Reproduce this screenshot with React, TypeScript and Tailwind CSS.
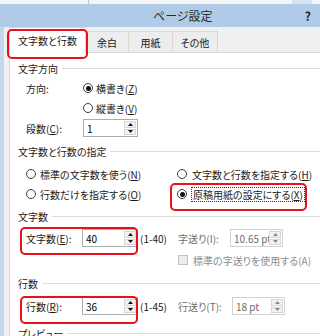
import React from "react";

const K = ({ children }: { children: React.ReactNode }) => (
  <span className="underline underline-offset-[1px]">{children}</span>
);

function Radio({ checked }: { checked?: boolean }) {
  return (
    <span className="w-[10px] h-[10px] rounded-full border border-[#3c3c3c] bg-white flex items-center justify-center shrink-0">
      {checked && <span className="w-[5px] h-[5px] rounded-full bg-[#111]" />}
    </span>
  );
}

function Arrow({ up, color }: { up?: boolean; color: string }) {
  return (
    <svg width="5" height="3" viewBox="0 0 5 3">
      <path d={up ? "M0 3 L2.5 0 L5 3 Z" : "M0 0 L2.5 3 L5 0 Z"} fill={color} />
    </svg>
  );
}

function Spin({ value, className, disabled }: { value: string; className: string; disabled?: boolean }) {
  const arrow = disabled ? "#8a8a8a" : "#111";
  return (
    <div
      className={`h-[18px] flex bg-white border shrink-0 ${className} ${
        disabled ? "border-[#d2d2d2] text-[#6d6d6d]" : "border-[#abadb3] text-black"
      }`}
    >
      <span className="flex-1 overflow-hidden whitespace-nowrap pl-[3px] flex items-center">{value}</span>
      <div className="w-[12px] flex flex-col my-px mr-px gap-px">
        <span className="flex-1 bg-[#f2f2f2] border border-[#d6d6d6] flex items-center justify-center">
          <Arrow up color={arrow} />
        </span>
        <span className="flex-1 bg-[#f2f2f2] border border-[#d6d6d6] flex items-center justify-center">
          <Arrow color={arrow} />
        </span>
      </div>
    </div>
  );
}

function Section({ title, className }: { title: string; className: string }) {
  return (
    <div className={`h-[16px] flex items-center gap-[4px] ${className}`}>
      <span className="whitespace-nowrap">{title}</span>
      <span className="flex-1 h-px bg-[#dcdcdc]" />
    </div>
  );
}

export default function App() {
  return (
    <div className="relative w-[320px] h-[336px] overflow-hidden bg-[#f0f0f0] [font-family:'Noto_Sans_CJK_JP','Noto_Sans',sans-serif] [font-feature-settings:'palt'] text-[10px] text-[#1a1a1a]">
      {/* window behind */}
      <div className="h-[4px] flex bg-[#f4f4f4]">
        <div className="w-[88px]" />
        <div className="w-px bg-[#c4c4c4]" />
        <div className="flex-1" />
        <div className="w-[20px] bg-[#d3e3f3]" />
        <div className="w-[8px]" />
      </div>

      {/* title bar */}
      <div className="h-[23px] bg-[#b0cbe8] flex items-center">
        <span className="ml-[153px] text-[12px] text-[#2b2b2b]">ページ設定</span>
        <span className="ml-auto mr-[9px] text-[12px] font-bold text-[#222]">?</span>
      </div>

      <div className="flex h-[309px]">
        <div className="w-[4px] bg-[#c4d7ec]" />
        <div className="flex-1 flex flex-col pl-[5px]">
          {/* tabs */}
          <div className="h-[29px] flex items-end">
            <div className="relative z-10 -mb-px w-[77px] h-[26px] bg-white border border-b-0 border-[#d9d9d9] flex items-center justify-center">
              文字数と行数
            </div>
            <div className="-ml-px w-[44px] h-[21px] bg-[#ededed] border border-b-0 border-[#d9d9d9] flex items-center justify-center">
              余白
            </div>
            <div className="-ml-px w-[45px] h-[21px] bg-[#ededed] border border-b-0 border-[#d9d9d9] flex items-center justify-center">
              用紙
            </div>
            <div className="-ml-px w-[46px] h-[21px] bg-[#ededed] border border-b-0 border-[#d9d9d9] flex items-center justify-center">
              その他
            </div>
          </div>

          {/* panel */}
          <div className="flex-1 bg-white border-l border-t border-[#d9d9d9] pl-[8px] flex flex-col">
            <Section title="文字方向" className="mt-[7px]" />
            <div className="mt-[4px] h-[16px] flex items-center pl-[8px]">
              <span className="w-[57px]">方向:</span>
              <Radio checked />
              <span className="ml-[3px]">
                横書き(<K>Z</K>)
              </span>
            </div>
            <div className="mt-[4px] h-[16px] flex items-center pl-[65px]">
              <Radio />
              <span className="ml-[3px]">
                縦書き(<K>V</K>)
              </span>
            </div>
            <div className="mt-[3px] h-[18px] flex items-center pl-[8px]">
              <span className="w-[57px]">
                段数(<K>C</K>):
              </span>
              <Spin value="1" className="w-[55px]" />
            </div>

            <Section title="文字数と行数の指定" className="mt-[6px]" />
            <div className="mt-[5px] h-[20px] flex items-center pl-[8px]">
              <div className="w-[151px] flex items-center">
                <Radio />
                <span className="ml-[4px]">
                  標準の文字数を使う(<K>N</K>)
                </span>
              </div>
              <Radio />
              <span className="ml-[5px]">
                文字数と行数を指定する(<K>H</K>)
              </span>
            </div>
            <div className="h-[20px] flex items-center pl-[8px]">
              <div className="w-[151px] flex items-center">
                <Radio />
                <span className="ml-[4px]">
                  行数だけを指定する(<K>O</K>)
                </span>
              </div>
              <Radio checked />
              <span className="ml-[4px] h-[15px] px-px border border-dotted border-[#333] flex items-center whitespace-nowrap">
                原稿用紙の設定にする(<K>X</K>)
              </span>
            </div>

            <Section title="文字数" className="mt-[4px]" />
            <div className="mt-[5px] h-[18px] flex items-center pl-[8px]">
              <span className="w-[56px]">
                文字数(<K>E</K>):
              </span>
              <Spin value="40" className="w-[56px]" />
              <span className="ml-[2px] w-[38px]">(1-40)</span>
              <span className="w-[52px] text-[#6d6d6d]">字送り(I):</span>
              <Spin value="10.65 pt" className="w-[53px]" disabled />
            </div>
            <div className="mt-[5px] h-[16px] flex items-center pl-[160px]">
              <span className="w-[10px] h-[10px] border border-[#c2c2c2] bg-[#ececec] shrink-0" />
              <span className="ml-[5px] text-[#8c8c8c] whitespace-nowrap">標準の字送りを使用する(A)</span>
            </div>

            <Section title="行数" className="mt-[7px]" />
            <div className="mt-[6px] h-[18px] flex items-center pl-[8px]">
              <span className="w-[56px]">
                行数(<K>R</K>):
              </span>
              <Spin value="36" className="w-[56px]" />
              <span className="ml-[2px] w-[38px]">(1-45)</span>
              <span className="w-[54px] text-[#6d6d6d]">行送り(T):</span>
              <Spin value="18 pt" className="w-[53px]" disabled />
            </div>

            <Section title="プレビュー" className="mt-[10px]" />
          </div>
        </div>
      </div>

      {/* red annotation boxes */}
      <div className="absolute left-[7px] top-[29px] w-[81px] h-[30px] border-2 border-[#e8101c] rounded-[5px] z-20" />
      <div className="absolute left-[170px] top-[183px] w-[137px] h-[28px] border-2 border-[#e8101c] rounded-[5px] z-20" />
      <div className="absolute left-[20px] top-[227px] w-[118px] h-[28px] border-2 border-[#e8101c] rounded-[5px] z-20" />
      <div className="absolute left-[20px] top-[296px] w-[118px] h-[28px] border-2 border-[#e8101c] rounded-[5px] z-20" />
    </div>
  );
}
